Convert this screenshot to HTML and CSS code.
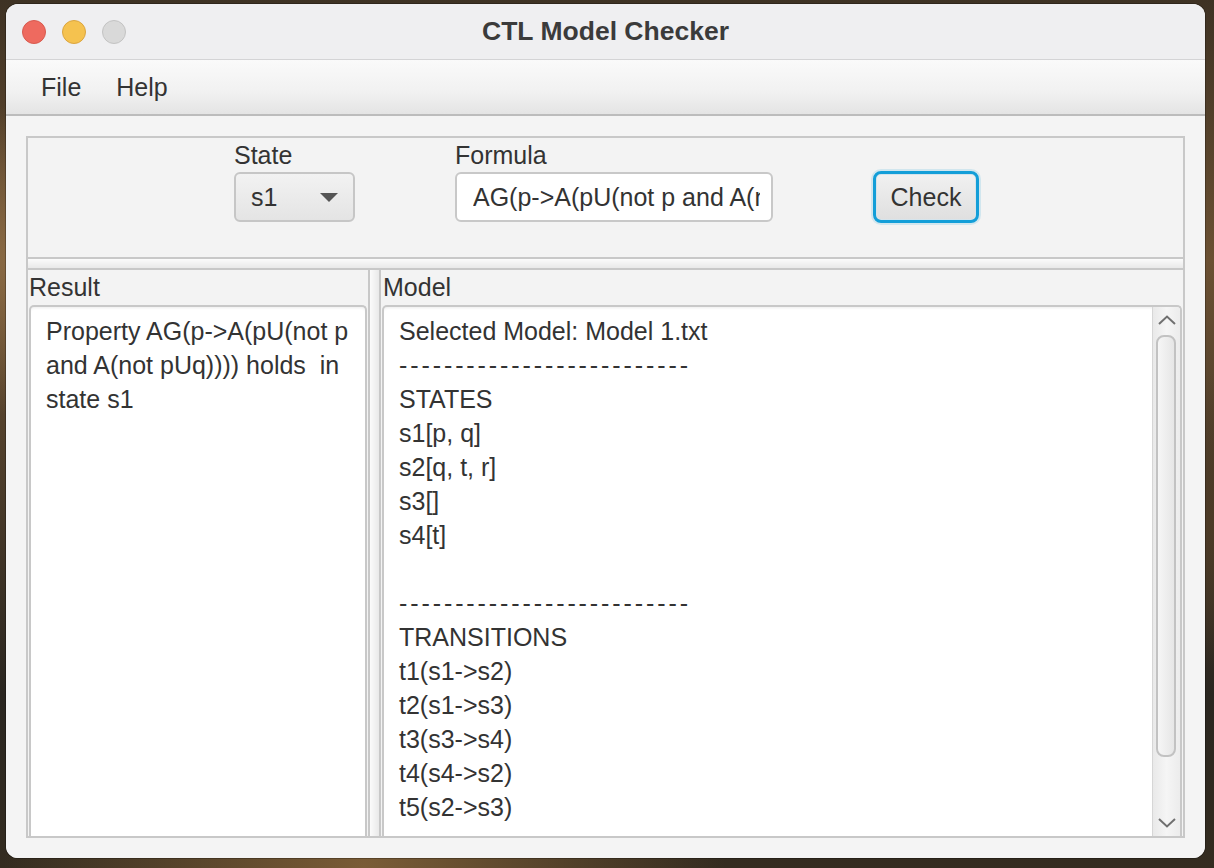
FILE: index.html
```html
<!DOCTYPE html>
<html>
<head>
<meta charset="utf-8">
<link rel="stylesheet" href="styles.css">
</head>
<body>
<div class="desktop">
  <div class="window">
    <div class="titlebar">
      <div class="lights">
        <span class="light red"></span>
        <span class="light yellow"></span>
        <span class="light gray"></span>
      </div>
      <div class="title">CTL Model Checker</div>
      <div></div>
    </div>
    <div class="menubar">
      <span class="menu">File</span>
      <span class="menu">Help</span>
    </div>
    <div class="content">
      <div class="frame">
        <div class="toppane">
          <div class="field-col">
            <div class="label">State</div>
            <div class="combo"><span>s1</span><span class="arrow"></span></div>
          </div>
          <div class="field-col">
            <div class="label">Formula</div>
            <div class="textfield"><div class="tf-inner">AG(p-&gt;A(pU(not p and A(not pUq))))</div></div>
          </div>
          <button class="btn">Check</button>
        </div>
        <div class="hdivider"></div>
        <div class="bottompane">
          <div class="pane pane-left">
            <div class="pane-label">Result</div>
            <div class="textarea">
              <div class="ta-text">
                <div class="line">Property AG(p-&gt;A(pU(not p</div>
                <div class="line">and A(not pUq)))) holds  in</div>
                <div class="line">state s1</div>
              </div>
            </div>
          </div>
          <div class="vdivider"></div>
          <div class="pane pane-right">
            <div class="pane-label model-label">Model</div>
            <div class="textarea">
              <div class="ta-text">
                <div class="line">Selected Model: Model 1.txt</div>
                <div class="line dashes">--------------------------</div>
                <div class="line">STATES</div>
                <div class="line">s1[p, q]</div>
                <div class="line">s2[q, t, r]</div>
                <div class="line">s3[]</div>
                <div class="line">s4[t]</div>
                <div class="line"> </div>
                <div class="line dashes">--------------------------</div>
                <div class="line">TRANSITIONS</div>
                <div class="line">t1(s1-&gt;s2)</div>
                <div class="line">t2(s1-&gt;s3)</div>
                <div class="line">t3(s3-&gt;s4)</div>
                <div class="line">t4(s4-&gt;s2)</div>
                <div class="line">t5(s2-&gt;s3)</div>
              </div>
              <div class="scrollbar">
                <div class="sb-btn">
                  <svg width="18" height="10" viewBox="0 0 18 10"><polyline points="1,9 9,1.5 17,9" fill="none" stroke="#707070" stroke-width="2"/></svg>
                </div>
                <div class="sb-track"><div class="sb-thumb"></div></div>
                <div class="sb-btn">
                  <svg width="18" height="10" viewBox="0 0 18 10"><polyline points="1,1 9,8.5 17,1" fill="none" stroke="#707070" stroke-width="2"/></svg>
                </div>
              </div>
            </div>
          </div>
        </div>
      </div>
    </div>
  </div>
</div>
</body>
</html>
```

FILE: styles.css
```css
* { box-sizing: border-box; }
html, body {
  margin: 0;
  padding: 0;
  width: 1214px;
  height: 868px;
  overflow: hidden;
}
body {
  font-family: "Liberation Sans", Arial, sans-serif;
  color: #333;
}
.desktop {
  width: 1214px;
  height: 868px;
  padding: 4px 0 0 6px;
  background:
    radial-gradient(ellipse at 2% 30%, #8a6a44 0%, rgba(138,106,68,0) 18%),
    radial-gradient(ellipse at 99% 60%, #4c3a26 0%, rgba(76,58,38,0) 20%),
    radial-gradient(ellipse at 30% 100%, #7a5c36 0%, rgba(122,92,54,0) 30%),
    linear-gradient(180deg, #3e3224 0%, #6b5032 30%, #4c3c2a 55%, #2a2620 80%, #342c20 100%);
}
.window {
  width: 1199px;
  height: 854px;
  border-radius: 12px;
  overflow: hidden;
  background: #f4f4f4;
  display: flex;
  flex-direction: column;
  box-shadow: 0 0 0 1px rgba(0,0,0,0.25);
}
.titlebar {
  height: 56px;
  flex: none;
  display: grid;
  grid-template-columns: 1fr auto 1fr;
  align-items: center;
  background: #efeff1;
  border-bottom: 1px solid #d4d4d6;
}
.lights {
  display: flex;
  gap: 16px;
  padding-left: 16px;
}
.light {
  width: 24px;
  height: 24px;
  border-radius: 50%;
  display: block;
}
.red { background: #ee6a5f; border: 1px solid #d85a4f; }
.yellow { background: #f5c24f; border: 1px solid #dba540; }
.gray { background: #d9d9d9; border: 1px solid #c3c3c3; }
.title {
  font-weight: bold;
  font-size: 26.5px;
  color: #3b3b3b;
}
.menubar {
  height: 56px;
  flex: none;
  display: flex;
  align-items: center;
  gap: 35px;
  padding-left: 35px;
  background: linear-gradient(180deg, #fafafa 0%, #f1f1f1 60%, #e4e4e4 100%);
  border-bottom: 2px solid #bcbcbc;
  font-size: 25px;
  color: #333;
}
.content {
  flex: 1;
  padding: 20px 20px 20px 20px;
  background: #f4f4f4;
  display: flex;
}
.frame {
  flex: 1;
  border: 2px solid #c8c8c8;
  display: flex;
  flex-direction: column;
  background: #f3f3f3;
}
.toppane {
  height: 119px;
  flex: none;
  display: flex;
  align-items: flex-start;
  padding-left: 206px;
  gap: 100px;
  font-size: 25px;
}
.field-col {
  display: flex;
  flex-direction: column;
}
.label {
  height: 34px;
  line-height: 34px;
}
.combo {
  width: 121px;
  height: 50px;
  border: 2px solid #c6c6c6;
  border-radius: 6px;
  background: linear-gradient(180deg, #f2f2f2 0%, #e4e4e4 100%);
  display: flex;
  align-items: center;
  justify-content: space-between;
  padding: 0 15px 0 15px;
}
.arrow {
  width: 0;
  height: 0;
  border-left: 9px solid transparent;
  border-right: 9px solid transparent;
  border-top: 9px solid #555;
}
.textfield {
  width: 318px;
  height: 50px;
  border: 2px solid #c8c8c8;
  border-radius: 6px;
  background: #fff;
  padding: 0 11px 0 16px;
  display: flex;
  align-items: center;
}
.tf-inner {
  white-space: nowrap;
  overflow: hidden;
  width: 100%;
}
.btn {
  margin-top: 33px;
  width: 106px;
  height: 52px;
  border: 3px solid #139ed8;
  border-radius: 8px;
  background: linear-gradient(180deg, #f1f1f1 0%, #dfdfdf 100%);
  box-shadow: inset 0 0 0 1px #d5e4ec, 0 0 0 2px rgba(19,158,216,0.15);
  font-family: "Liberation Sans", Arial, sans-serif;
  font-size: 25px;
  color: #333;
  padding: 0;
}
.hdivider {
  height: 13px;
  flex: none;
  border-top: 2px solid #c8c8c8;
  border-bottom: 2px solid #c8c8c8;
  background: linear-gradient(180deg, #fbfbfb 0%, #e9e9e9 100%);
}
.bottompane {
  flex: 1;
  display: flex;
  font-size: 25px;
}
.pane {
  display: flex;
  flex-direction: column;
}
.pane-left { width: 340px; flex: none; }
.pane-right { flex: 1; }
.pane-label {
  height: 35px;
  line-height: 35px;
  padding-left: 1px;
}
.model-label { padding-left: 2px; }
.vdivider {
  width: 13px;
  flex: none;
  border-left: 2px solid #c8c8c8;
  border-right: 2px solid #c8c8c8;
  background: linear-gradient(90deg, #fbfbfb 0%, #e9e9e9 100%);
}
.textarea {
  flex: 1;
  margin: 0 1px;
  border: 2px solid #c8c8c8;
  border-bottom: none;
  border-radius: 5px 5px 0 0;
  background: #fff;
  display: flex;
  box-shadow: inset 0 3px 3px -2px rgba(0,0,0,0.08);
}
.ta-text {
  flex: 1;
  padding: 7px 0 0 15px;
}
.line {
  height: 34px;
  line-height: 34px;
  white-space: pre;
}
.dashes {
  letter-spacing: 2.9px;
}
.scrollbar {
  width: 28px;
  flex: none;
  display: flex;
  flex-direction: column;
  border-left: 1px solid #d6d6d6;
  background: linear-gradient(90deg, #e9e9e9 0%, #f5f5f5 50%, #ececec 100%);
  border-radius: 0 4px 0 0;
}
.sb-btn {
  height: 26px;
  flex: none;
  display: flex;
  align-items: center;
  justify-content: center;
}
.sb-track {
  flex: 1;
  padding: 2px 0 0 3px;
}
.sb-thumb {
  width: 20px;
  height: 422px;
  border: 2px solid #c2c2c2;
  border-radius: 8px;
  background: linear-gradient(90deg, #f6f6f6 0%, #e6e6e6 100%);
}
```
